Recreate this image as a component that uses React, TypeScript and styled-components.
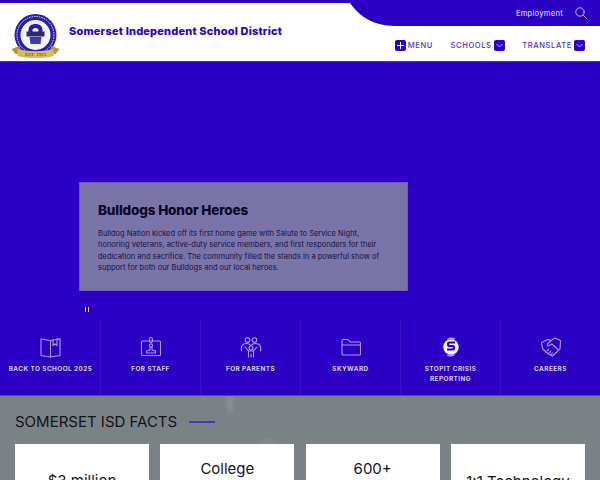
import React from "react";
import styled, { createGlobalStyle } from "styled-components";

const BLUE = "#2b00c4";
const NAVTEXT = "#4d33c2";

const Global = createGlobalStyle`
  html, body { margin: 0; padding: 0; width: 600px; height: 480px; overflow: hidden; background: #7b8286; }
  body { font-family: Inter, "Liberation Sans", sans-serif; }
  * { box-sizing: border-box; }
`;

const Page = styled.div`
  width: 600px;
  height: 480px;
  overflow: hidden;
  display: flex;
  flex-direction: column;
`;

const Header = styled.header`
  height: 62px;
  flex: none;
  background: #fff;
  border-top: 3px solid ${BLUE};
  border-bottom: 1px solid #4d33c2;
  display: flex;
  justify-content: space-between;
`;

const Brand = styled.div`
  display: flex;
  align-items: flex-start;
  padding: 9px 0 0 11px;
  gap: 8px;
`;

const SchoolName = styled.div`
  font-size: 11px;
  font-weight: 800;
  letter-spacing: 0.18px;
  color: ${BLUE};
  line-height: 14px;
  margin-top: 12px;
  white-space: nowrap;
`;

const HeaderRight = styled.div`
  width: 250px;
  display: flex;
  flex-direction: column;
`;

const TopBarRow = styled.div`
  height: 23px;
  display: flex;
`;

const TopBar = styled.div`
  flex: 1;
  background: ${BLUE};
  display: flex;
  align-items: center;
  justify-content: flex-end;
  gap: 12px;
  padding: 0 13px 3px 0;
`;

const TopLink = styled.span`
  font-size: 7.6px;
  font-weight: 500;
  letter-spacing: 0.2px;
  color: #d5ccf5;
`;

const Nav = styled.nav`
  display: flex;
  justify-content: flex-end;
  gap: 17.5px;
  padding: 13px 15px 0 0;
`;

const NavItem = styled.div`
  display: flex;
  align-items: center;
  gap: 2px;
  font-size: 7.6px;
  font-weight: 500;
  letter-spacing: 0.6px;
  color: ${NAVTEXT};
  height: 12px;
`;

const NavIconBox = styled.span`
  width: 11px;
  height: 11px;
  border-radius: 2px;
  background: ${BLUE};
  display: flex;
  align-items: center;
  justify-content: center;
`;

const Hero = styled.section`
  height: 258px;
  flex: none;
  background: ${BLUE};
  padding: 120px 0 0 79px;
  display: flex;
  flex-direction: column;
`;

const Caption = styled.div`
  width: 329px;
  height: 109px;
  background: #7b74a8;
  border: 1px solid #6c5bb8;
  padding: 18px 18px 0 18px;
`;

const CaptionTitle = styled.h2`
  margin: 0 0 9px;
  font-size: 13.5px;
  line-height: 18px;
  font-weight: 800;
  letter-spacing: -0.15px;
  color: #0a0626;
`;

const CaptionText = styled.p`
  margin: 0;
  font-size: 7.5px;
  line-height: 11.3px;
  color: #17123d;
  letter-spacing: 0;
  white-space: nowrap;
`;

const PauseMark = styled.div`
  margin: 16px 0 0 6px;
  width: 4px;
  height: 5px;
  border-left: 1.5px solid #e3ddfa;
  border-right: 1.5px solid #e3ddfa;
`;

const Tiles = styled.nav`
  height: 76px;
  flex: none;
  background: ${BLUE};
  border-bottom: 1px solid #4d33d0;
  display: grid;
  grid-template-columns: repeat(6, 100px);
`;

const Tile = styled.div<{ $first?: boolean }>`
  border-left: 1px solid ${(p) => (p.$first ? "transparent" : "#3512c8")};
  display: flex;
  flex-direction: column;
  align-items: center;
  padding-top: 16px;
  gap: 7px;
`;

const TileIcon = styled.div`
  height: 22px;
  display: flex;
  align-items: center;
  justify-content: center;
`;

const TileLabel = styled.div`
  font-size: 6.4px;
  line-height: 9.5px;
  font-weight: 700;
  letter-spacing: 0.45px;
  color: #d9d2f7;
  text-align: center;
  white-space: nowrap;
`;

const Facts = styled.section`
  flex: 1;
  background:
    radial-gradient(ellipse 6px 14px at 230px 8px, #8b9295, transparent),
    radial-gradient(ellipse 8px 6px at 268px 46px, #858c90, transparent),
    #7b8286;
  padding: 0 15px;
  overflow: hidden;
`;

const FactsHead = styled.div`
  height: 48px;
  display: flex;
  align-items: center;
  gap: 12px;
  padding-top: 3px;
`;

const FactsTitle = styled.h2`
  margin: 0;
  font-size: 15px;
  font-weight: 400;
  letter-spacing: 0;
  color: #11131a;
  white-space: nowrap;
`;

const FactsRule = styled.span`
  width: 26px;
  height: 2px;
  background: #4a38bb;
`;

const Cards = styled.div`
  display: grid;
  grid-template-columns: repeat(4, 134px);
  column-gap: 11.33px;
`;

const Card = styled.div<{ $top: number }>`
  height: 120px;
  background: #fff;
  padding: ${(p) => p.$top}px 8px 0;
  font-size: 15px;
  line-height: 18px;
  color: #11131a;
  text-align: center;
`;

const I = { fill: "none", stroke: "#a99cf0", strokeWidth: 1.1, strokeLinejoin: "round" as const, strokeLinecap: "round" as const };

const Seal = () => (
  <svg width="50" height="49" viewBox="0 0 49 49">
    <circle cx="24" cy="23" r="21" fill="#2b1fa8" />
    <circle cx="24" cy="23" r="18.5" fill="none" stroke="#e6e6f5" strokeWidth="1" strokeDasharray="1.5 1" />
    <circle cx="24" cy="23" r="15" fill="#f3f3fb" />
    <path d="M17 18c0-4 3-6 7-6s7 2 7 6v2h-4v-2c0-1-1-2-3-2s-3 1-3 2v6h-4z" fill="#2b1fa8" />
    <rect x="15" y="19.5" width="18" height="5" fill="#2d2a6b" />
    <path d="M18 25h12l-1 7h-10z" fill="#3c39a8" />
    <path d="M0 37l8-3 2 7-6 1z" fill="#b8952e" />
    <path d="M48 37l-8-3-2 7 6 1z" fill="#b8952e" />
    <path d="M6 37c11 3 25 3 36 0v7c-11 3-25 3-36 0z" fill="#d9bb5a" />
    <text x="24" y="44" textAnchor="middle" fontSize="5" fontFamily="Liberation Serif, serif" fill="#4a3a10">EST. 1923</text>
  </svg>
);

const Curve = () => (
  <svg width="48" height="23" viewBox="0 0 48 23" style={{ display: "block", flex: "none" }}>
    <path d="M0 0H48V23C28 23 13 18 0 0Z" fill={BLUE} />
  </svg>
);

const Search = () => (
  <svg width="12" height="12" viewBox="0 0 12 12" fill="none" stroke="#cfc6f5" strokeWidth="0.9" strokeLinecap="round">
    <circle cx="5" cy="5" r="4.2" />
    <path d="M8 8l3.6 3.6" />
  </svg>
);

const Plus = () => (
  <svg width="9" height="9" viewBox="0 0 9 9" stroke="#fff" strokeWidth="1">
    <path d="M4.5 1v7M1 4.5h7" />
  </svg>
);

const Chevron = () => (
  <svg width="9" height="9" viewBox="0 0 9 9" fill="none" stroke="#e5e0fb" strokeWidth="0.8">
    <path d="M1.500 3l3 3 3-3" />
  </svg>
);

const BookIcon = () => (
  <svg width="22" height="22" viewBox="0 0 22 22" {...I}>
    <path d="M1 3l9.500 1.500V21L1 19.500z" />
    <path d="M10.500 4.500L20 3v16.500l-9.500 1.500" />
    <path d="M13 3.800V9.500l2-1.700 2 1.700V2.700l3 .3" />
  </svg>
);

const BadgeIcon = () => (
  <svg width="22" height="22" viewBox="0 0 22 22" {...I}>
    <rect x="1.500" y="5" width="19" height="14.500" rx="1" />
    <rect x="9.500" y="1.500" width="3" height="5" rx="1.500" />
    <circle cx="11" cy="9.500" r="1.600" />
    <path d="M10 11v3l-3.500 1v2h9v-2L12 14v-3" />
  </svg>
);

const ParentsIcon = () => (
  <svg width="22" height="22" viewBox="0 0 22 22" {...I}>
    <circle cx="7.500" cy="4" r="2.300" />
    <circle cx="14.500" cy="4" r="2.300" />
    <path d="M1.500 15c-1-5 1-7.500 5-7.500 2 0 3.500.7 4.500 2 1-1.300 2.500-2 4.500-2 4 0 6 2.500 5 7.500" />
    <circle cx="11" cy="12" r="2" />
    <path d="M5 11l3.500 4h5L17 11M8.500 15v6M13.500 15v6M11 18v3" />
  </svg>
);

const FolderIcon = () => (
  <svg width="20" height="18" viewBox="0 0 20 18" {...I}>
    <path d="M1 16V2.500C1 2 1.500 1.500 2 1.500h5l2 2.500h9.500c.5 0 1 .5 1 1V16c0 .5-.5 1-1 1H2c-.5 0-1-.5-1-1z" />
    <path d="M1 7h18.500" />
  </svg>
);

const StopItIcon = () => (
  <svg width="18" height="20" viewBox="0 0 18 20">
    <circle cx="9" cy="10" r="7.800" fill="#f4f2fe" />
    <path d="M4.500 2.500C7 0 11 0 13.500 1.500L11 3z" fill="#a99cf0" />
    <path d="M13.500 17.500C11 20 7 20 4.500 18.500L7 17z" fill="#a99cf0" />
    <path d="M13 5.500H7.500c-2 0-2 3.500 0 3.500h3c2 0 2 3.500 0 3.500H5" fill="none" stroke={BLUE} strokeWidth="2.200" />
  </svg>
);

const HandshakeIcon = () => (
  <svg width="22" height="22" viewBox="0 0 22 22" {...I}>
    <path d="M1.500 6.500L8 3.500l3 1 4-2.500 5.500 2.500L20 13l-7.500 7-2-1-1.500-.5-1.500-1.500-1.500-1-3.500-3.500z" />
    <path d="M11 4.500L7.500 8c-.8 1 .5 2.200 1.700 1.500L12 8l6 5.500" />
    <path d="M7 15l1.500-1.500M9 17l1.700-1.700M11 18.500l1.500-1.500" />
  </svg>
);

const tiles = [
  { label: <>BACK TO SCHOOL 2025</>, icon: <BookIcon /> },
  { label: <>FOR STAFF</>, icon: <BadgeIcon /> },
  { label: <>FOR PARENTS</>, icon: <ParentsIcon /> },
  { label: <>SKYWARD</>, icon: <FolderIcon /> },
  { label: <>STOPIT CRISIS<br />REPORTING</>, icon: <StopItIcon /> },
  { label: <>CAREERS</>, icon: <HandshakeIcon /> },
];

const cards = [
  { top: 28, text: <>$3 million<br />Scholarships</> },
  { top: 16, text: <>College<br />Partnerships</> },
  { top: 16, text: <>600+<br />Teachers</> },
  { top: 29, text: <>1:1 Technology</> },
];

export default function App() {
  return (
    <Page>
      <Global />
      <Header>
        <Brand>
          <Seal />
          <SchoolName>Somerset Independent School District</SchoolName>
        </Brand>
        <HeaderRight>
          <TopBarRow>
            <Curve />
            <TopBar>
              <TopLink>Employment</TopLink>
              <Search />
            </TopBar>
          </TopBarRow>
          <Nav>
            <NavItem><NavIconBox><Plus /></NavIconBox>MENU</NavItem>
            <NavItem>SCHOOLS<NavIconBox><Chevron /></NavIconBox></NavItem>
            <NavItem>TRANSLATE<NavIconBox><Chevron /></NavIconBox></NavItem>
          </Nav>
        </HeaderRight>
      </Header>
      <Hero>
        <Caption>
          <CaptionTitle>Bulldogs Honor Heroes</CaptionTitle>
          <CaptionText>
            Bulldog Nation kicked off its first home game with Salute to Service Night,<br />
            honoring veterans, active-duty service members, and first responders for their<br />
            dedication and sacrifice. The community filled the stands in a powerful show of<br />
            support for both our Bulldogs and our local heroes.
          </CaptionText>
        </Caption>
        <PauseMark />
      </Hero>
      <Tiles>
        {tiles.map((t, i) => (
          <Tile key={i} $first={i === 0}>
            <TileIcon>{t.icon}</TileIcon>
            <TileLabel>{t.label}</TileLabel>
          </Tile>
        ))}
      </Tiles>
      <Facts>
        <FactsHead>
          <FactsTitle>SOMERSET ISD FACTS</FactsTitle>
          <FactsRule />
        </FactsHead>
        <Cards>
          {cards.map((c, i) => (
            <Card key={i} $top={c.top}>{c.text}</Card>
          ))}
        </Cards>
      </Facts>
    </Page>
  );
}
